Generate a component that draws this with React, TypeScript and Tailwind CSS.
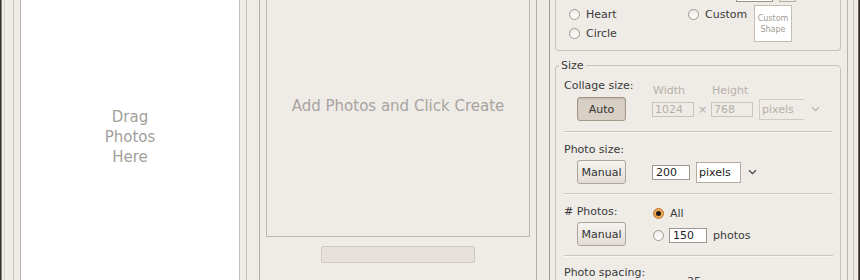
import React from "react";

const Radio = ({ checked }: { checked?: boolean }) =>
  checked ? (
    <span className="w-[11px] h-[11px] rounded-full border border-[#b5793a] bg-[#f2a64e] flex items-center justify-center shrink-0">
      <span className="w-[5px] h-[5px] rounded-full bg-[#1e1a16]" />
    </span>
  ) : (
    <span className="w-[11px] h-[11px] rounded-full border border-[#a0978d] bg-linear-to-b from-[#efece8] to-white shrink-0" />
  );

const Chevron = ({ disabled }: { disabled?: boolean }) => (
  <svg width="9" height="6" viewBox="0 0 9 6" className="shrink-0">
    <path
      d="M1 1.2 L4.5 4.6 L8 1.2"
      fill="none"
      stroke={disabled ? "#bdb6ad" : "#4a4a4a"}
      strokeWidth="1.3"
    />
  </svg>
);

const ManualBtn = () => (
  <div className="ml-[13px] w-[49px] h-[24px] rounded-[3px] border border-[#aea499] bg-linear-to-b from-[#f6f4f1] to-[#e2dcd5] flex items-center justify-center leading-[13px] text-[#333]">
    Manual
  </div>
);

const Separator = () => (
  <div className="flex flex-col shrink-0">
    <div className="h-px bg-[#cdc7bf]" />
    <div className="h-px bg-[#f8f7f4]" />
  </div>
);

export default function App() {
  return (
    <div className="w-[860px] h-[280px] overflow-hidden bg-[#efebe7] flex font-['DejaVu_Sans',sans-serif] text-[11px] text-[#3a3a3a]">
      <div className="w-px shrink-0 bg-[#35302b]" />
      <div className="w-px shrink-0 bg-[#8c847b]" />
      <div className="w-[2px] shrink-0" />
      <div className="w-px shrink-0 bg-[#dcd7d0]" />
      <div className="w-[8px] shrink-0" />
      <div className="w-px shrink-0 bg-[#c9c4bd]" />
      <div className="w-[6px] shrink-0" />
      {/* Drag area */}
      <div className="w-[220px] shrink-0 bg-white border-l border-r border-l-[#b8b2ab] border-r-[#c3beb7] flex flex-col items-center pt-[107px] text-[15px] leading-[20px] text-[#a3a09b]">
        <span>Drag</span>
        <span>Photos</span>
        <span>Here</span>
      </div>
      <div className="w-[6px] shrink-0" />
      <div className="w-px shrink-0 bg-[#c8c3bc]" />
      <div className="w-[12px] shrink-0" />
      <div className="w-px shrink-0 bg-[#b4aea7]" />
      <div className="w-[6px] shrink-0" />
      {/* Preview */}
      <div className="w-[264px] shrink-0 flex flex-col">
        <div className="h-[237px] shrink-0 border-x border-b border-[#bcb6af] flex justify-center pt-[98px]">
          <span className="text-[15px] leading-[16px] text-[#a7a49f]">
            Add Photos and Click Create
          </span>
        </div>
        <div className="mt-[9px] shrink-0 self-center w-[154px] h-[17px] border border-[#d0c9c0] bg-[#e5e0da] rounded-[2px]" />
      </div>
      <div className="w-[6px] shrink-0" />
      <div className="w-px shrink-0 bg-[#b4aea7]" />
      <div className="w-[12px] shrink-0" />
      <div className="w-px shrink-0 bg-[#a89c8f]" />
      <div className="w-[5px] shrink-0" />
      {/* Options panel */}
      <div className="w-[286px] shrink-0 flex flex-col">
        {/* Shape group */}
        <div className="h-[51px] shrink-0 border-x border-b border-[#c9c2b9] rounded-b-[4px] flex flex-col">
          <div className="h-[2px] shrink-0 flex">
            <div className="ml-[180px] w-[37px] h-[2px] border-x border-b border-[#9d9488] bg-white" />
            <div className="ml-[6px] w-[17px] h-[2px] border-x border-b border-[#b5ada3]" />
          </div>
          <div className="flex shrink-0">
            <div className="ml-[13px] w-[119px] pt-[5px] flex flex-col gap-[5px]">
              <div className="h-[14px] flex items-center gap-[6px] leading-[13px]">
                <Radio />
                <span>Heart</span>
              </div>
              <div className="h-[14px] flex items-center gap-[6px] leading-[13px]">
                <Radio />
                <span>Circle</span>
              </div>
            </div>
            <div className="w-[66px] pt-[5px]">
              <div className="h-[14px] flex items-center gap-[6px] leading-[13px]">
                <Radio />
                <span>Custom</span>
              </div>
            </div>
            <div className="mt-[3px] w-[38px] h-[37px] bg-white border border-[#c4bdb4] flex flex-col items-center justify-center text-[8px] leading-[11px] text-[#a19b94]">
              <span>Custom</span>
              <span>Shape</span>
            </div>
          </div>
        </div>
        {/* Size group */}
        <div className="mt-[14px] shrink-0 relative border border-[#c9c2b9] rounded-[4px] pl-[8px] pr-[7px] flex flex-col">
          <span className="absolute left-[3px] -top-[7px] px-[2px] bg-[#efebe7] leading-[13px]">
            Size
          </span>
          {/* Collage size */}
          <div className="pt-[13px] flex shrink-0">
            <div className="w-[88px] flex flex-col">
              <span className="leading-[13px]">Collage size:</span>
              <div className="mt-[5px] ml-[13px] w-[49px] h-[24px] rounded-[3px] border border-[#a3978a] bg-[#d8cfc5] shadow-[inset_0_1px_2px_rgba(0,0,0,0.12)] flex items-center justify-center leading-[13px] text-[#333]">
                Auto
              </div>
            </div>
            <div className="flex flex-col">
              <div className="mt-[5px] h-[13px] flex leading-[13px] text-[#b7b1a9]">
                <span className="w-[59px] pl-px">Width</span>
                <span className="pl-px">Height</span>
              </div>
              <div className="h-[24px] flex items-center">
                <div className="w-[42px] h-[15px] border border-[#cbc4bb] pl-[2px] leading-[13px] text-[#b5afa7]">
                  1024
                </div>
                <span className="w-[17px] text-center leading-[13px] text-[#b5afa7]">×</span>
                <div className="w-[42px] h-[15px] border border-[#cbc4bb] pl-[2px] leading-[13px] text-[#b5afa7]">
                  768
                </div>
                <div className="ml-[6px] w-[45px] h-[21px] border border-r-0 border-[#d2cbc2] pl-[2px] flex items-center leading-[13px] text-[#b5afa7]">
                  pixels
                </div>
                <div className="ml-[7px]">
                  <Chevron disabled />
                </div>
              </div>
            </div>
          </div>
          <div className="mt-[10px] shrink-0">
            <Separator />
          </div>
          {/* Photo size */}
          <div className="pt-[10px] flex shrink-0">
            <div className="w-[88px] flex flex-col">
              <span className="leading-[13px]">Photo size:</span>
              <div className="mt-[4px]">
                <ManualBtn />
              </div>
            </div>
            <div className="mt-[17px] h-[24px] flex items-center">
              <div className="w-[38px] h-[15px] border border-[#a0968b] bg-white pl-[3px] leading-[13px] text-[#222]">
                200
              </div>
              <div className="ml-[6px] w-[45px] h-[21px] border border-[#b3aba1] bg-white pl-[2px] flex items-center leading-[13px] text-[#222]">
                pixels
              </div>
              <div className="ml-[7px]">
                <Chevron />
              </div>
            </div>
          </div>
          <div className="mt-[9px] shrink-0">
            <Separator />
          </div>
          {/* # Photos */}
          <div className="pt-[10px] flex shrink-0">
            <div className="w-[89px] flex flex-col">
              <span className="leading-[13px]"># Photos:</span>
              <div className="mt-[4px]">
                <ManualBtn />
              </div>
            </div>
            <div className="flex flex-col">
              <div className="h-[17px] flex items-center gap-[6px] leading-[13px]">
                <Radio checked />
                <span>All</span>
              </div>
              <div className="h-[23px] pt-[3px] flex items-center leading-[13px]">
                <Radio />
                <div className="ml-[5px] w-[38px] h-[15px] border border-[#a0968b] bg-white pl-[3px] text-[#222]">
                  150
                </div>
                <span className="ml-[6px]">photos</span>
              </div>
            </div>
          </div>
          <div className="mt-[9px] shrink-0">
            <Separator />
          </div>
          {/* Photo spacing */}
          <div className="pt-[9px] flex shrink-0">
            <div className="w-[88px] flex flex-col">
              <span className="leading-[13px]">Photo spacing:</span>
            </div>
            <div className="pl-[35px] pt-[9px] leading-[13px] text-[#444]">25</div>
          </div>
          <div className="h-[40px] shrink-0" />
        </div>
      </div>
      <div className="w-[6px] shrink-0" />
      <div className="w-px shrink-0 bg-[#bbb3aa]" />
      <div className="w-[5px] shrink-0" />
      <div className="w-px shrink-0 bg-[#c9c3bb]" />
      <div className="w-[4px] shrink-0" />
      <div className="w-px shrink-0 bg-[#6a6159]" />
      <div className="w-px shrink-0 bg-[#2f2a26]" />
    </div>
  );
}
